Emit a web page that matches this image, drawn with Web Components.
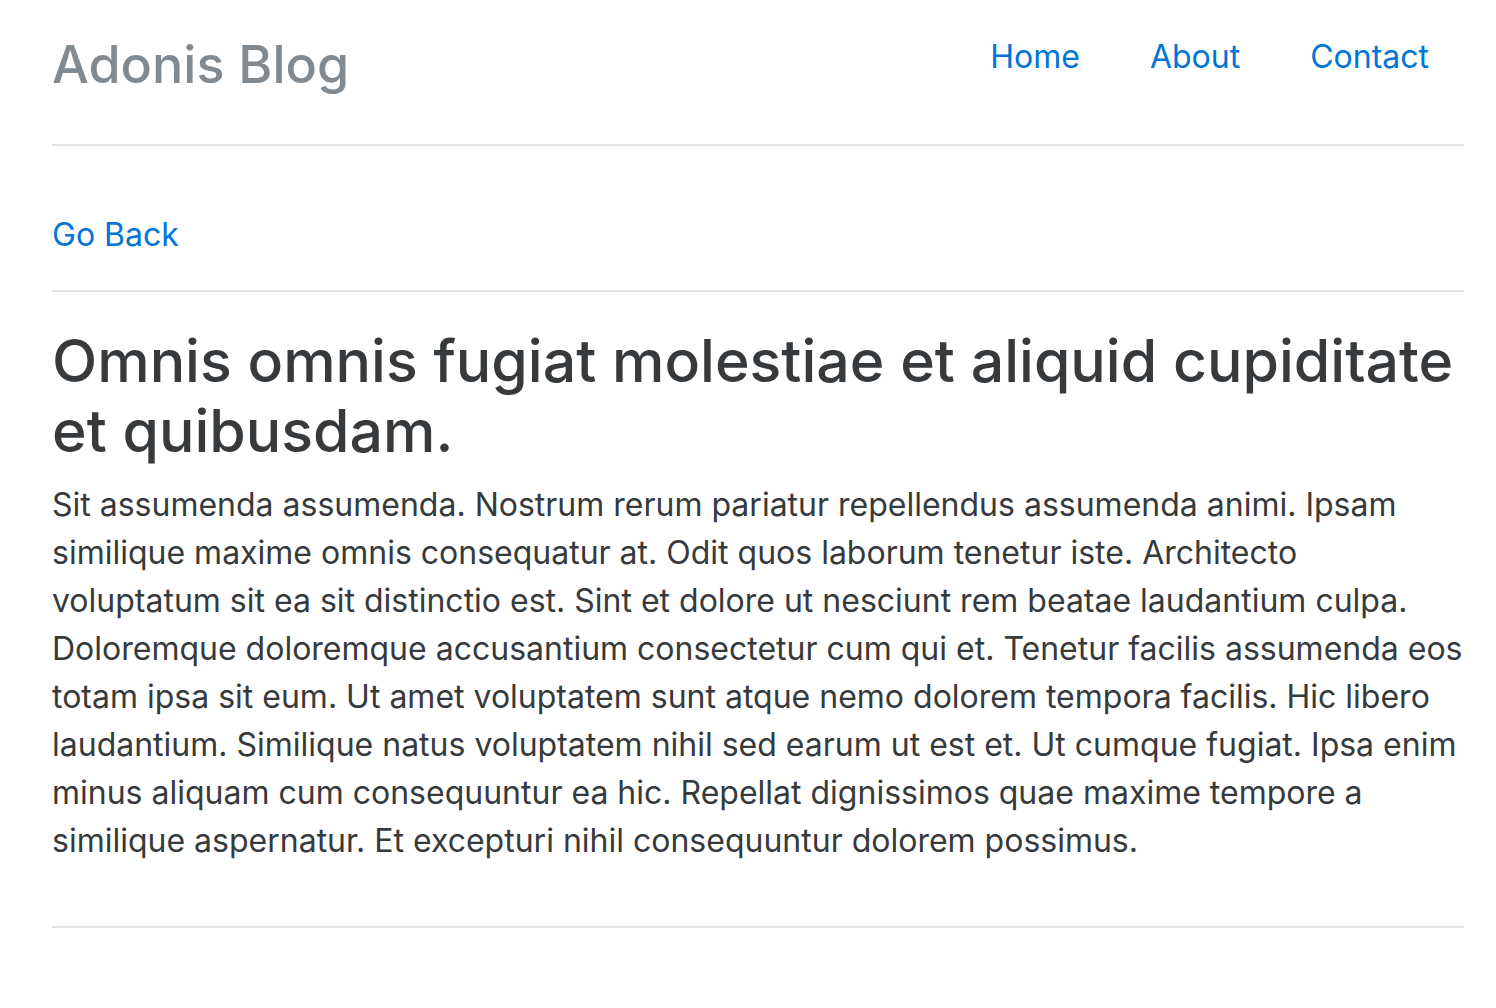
<!DOCTYPE html>
<html lang="en">
<head>
<meta charset="utf-8">
<title>Adonis Blog</title>
<style>
body { margin: 0; background: #fff; color: #373a3c; font: 32px/48px Inter, "Liberation Sans", sans-serif; }
</style>
</head>
<body>
<blog-page>
  <blog-header slot="header" name="Adonis Blog">
    <nav-link href="#home">Home</nav-link>
    <nav-link href="#about">About</nav-link>
    <nav-link href="#contact">Contact</nav-link>
  </blog-header>
  <blog-post back="#posts">
    <span slot="title">Omnis omnis fugiat molestiae et aliquid cupiditate et quibusdam.</span>
    Sit assumenda assumenda. Nostrum rerum pariatur repellendus assumenda animi. Ipsam similique maxime omnis consequatur at. Odit quos laborum tenetur iste. Architecto voluptatum sit ea sit distinctio est. Sint et dolore ut nesciunt rem beatae laudantium culpa. Doloremque doloremque accusantium consectetur cum qui et. Tenetur facilis assumenda eos totam ipsa sit eum. Ut amet voluptatem sunt atque nemo dolorem tempora facilis. Hic libero laudantium. Similique natus voluptatem nihil sed earum ut est et. Ut cumque fugiat. Ipsa enim minus aliquam cum consequuntur ea hic. Repellat dignissimos quae maxime tempore a similique aspernatur. Et excepturi nihil consequuntur dolorem possimus.
  </blog-post>
</blog-page>
<script>
const define = (tag, html) => customElements.define(tag, class extends HTMLElement {
  constructor() {
    super();
    this.attachShadow({ mode: "open" }).innerHTML = html;
  }
  connectedCallback() {
    const link = this.shadowRoot.querySelector("a");
    const target = this.getAttribute("href") || this.getAttribute("back");
    if (link && target) link.href = target;
    const name = this.shadowRoot.querySelector(".name");
    if (name) name.textContent = this.getAttribute("name");
  }
});

define("nav-link", `
<style>
:host { display: block; }
a { display: block; padding: 0 35px; color: #0275d8; text-decoration: none; }
</style>
<a><slot></slot></a>`);

define("blog-header", `
<style>
:host { display: flex; justify-content: space-between; align-items: flex-start; padding-bottom: 49px; border-bottom: 2px solid #e5e5e5; }
.name { margin: 0; padding-top: 2px; font-size: 52px; line-height: 60px; font-weight: 500; color: #818a91; }
nav { display: flex; }
</style>
<h3 class="name"></h3>
<nav><slot></slot></nav>`);

define("blog-post", `
<style>
:host { display: block; padding-bottom: 61px; border-bottom: 2px solid #e5e5e5; }
a { color: #0275d8; text-decoration: none; }
hr { margin: 31px 0 34px; border: 0; border-top: 2px solid #e5e5e5; }
h1 { margin: 0 0 15px; font-size: 59px; line-height: 70px; font-weight: 500; }
p { margin: 0; }
</style>
<a>Go Back</a>
<hr>
<article><h1><slot name="title"></slot></h1><p><slot></slot></p></article>`);

define("blog-page", `
<style>
:host { display: block; padding: 33px 32px 48px 52px; }
main { display: block; margin-top: 65px; }
</style>
<slot name="header"></slot>
<main><slot></slot></main>`);
</script>
</body>
</html>
